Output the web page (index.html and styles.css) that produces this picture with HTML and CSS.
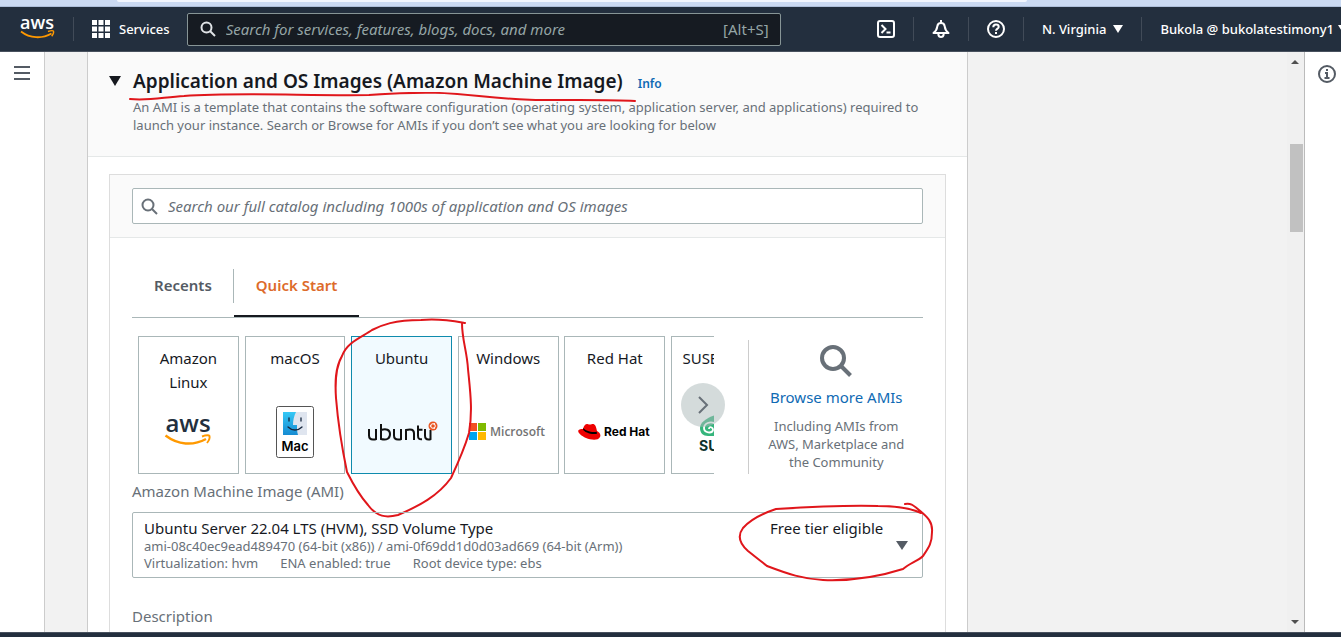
FILE: index.html
```html
<!DOCTYPE html>
<html lang="en">
<head>
<meta charset="utf-8">
<title>Launch an instance | EC2</title>
<link rel="stylesheet" href="styles.css">
</head>
<body>
<div class="browser-edge"><div class="browser-toolbar"></div></div>

<header class="topbar">
  <a class="aws-home" href="#" aria-label="AWS home">
    <svg width="36" height="42" viewBox="0 -9 36 42">
      <text x="17" y="12" text-anchor="middle" class="aws-word aws-word-light">aws</text>
      <path d="M1 14.500C10 21.500 22 22 31.500 16.500" fill="none" stroke="#f90" stroke-width="1.800"/>
      <path d="M28 14.500C31 13.500 33 13.500 33.500 14.200C34 15.500 33 17.500 31.700 19.200" fill="none" stroke="#f90" stroke-width="1.400"/>
    </svg>
  </a>
  <button class="services" type="button">
    <svg width="18" height="18" viewBox="0 0 18 18" fill="#fff"><path d="M0 0h5v5H0zM6.500 0h5v5h-5zM13 0h5v5h-5zM0 6.500h5v5H0zM6.500 6.500h5v5h-5zM13 6.500h5v5h-5zM0 13h5v5H0zM6.500 13h5v5h-5zM13 13h5v5h-5z"/></svg>
    <span>Services</span>
  </button>
  <label class="global-search">
    <svg width="16" height="16" viewBox="0 0 16 16" fill="none" stroke="#e0e3e6" stroke-width="2"><circle cx="6.500" cy="6.500" r="5"/><path d="M10 10l5 5"/></svg>
    <input type="text" aria-label="Search" placeholder="Search for services, features, blogs, docs, and more">
    <span class="shortcut">[Alt+S]</span>
  </label>
  <nav class="top-actions">
    <button type="button" aria-label="CloudShell">
      <svg width="18" height="18" viewBox="0 0 18 18" fill="none" stroke="#fff" stroke-width="2"><rect x="1" y="1" width="16" height="16" rx="2"/><path d="M4.500 5l4 4-4 4M9.500 12.500h4"/></svg>
    </button>
    <button type="button" aria-label="Notifications">
      <svg width="18" height="18" viewBox="0 0 18 18" fill="none" stroke="#fff" stroke-width="2" stroke-linejoin="round"><path d="M9 0v3M1.500 13C4.500 10.500 5 9 5.300 6.300C5.600 4.300 7 3 9 3s3.400 1.300 3.700 3.300C13 9 13.500 10.500 16.500 13zM6.200 14c.3 1.800 1.400 3 2.800 3s2.500-1.200 2.800-3"/></svg>
    </button>
    <button type="button" aria-label="Help">
      <svg width="18" height="18" viewBox="0 0 18 18" fill="none" stroke="#fff" stroke-width="2"><circle cx="9" cy="9" r="8"/><path d="M6.300 7.300C6.300 5.500 7.400 4.600 9 4.600s2.700.9 2.700 2.300C11.700 8.700 9 8.700 9 10.800M9 12v2"/></svg>
    </button>
    <button class="menu-region" type="button">N. Virginia <svg width="10" height="8" viewBox="0 0 10 8" fill="#fff"><path d="M0 0h10L5 8z"/></svg></button>
    <button class="menu-user" type="button">Bukola @ bukolatestimony1 <svg width="10" height="8" viewBox="0 0 10 8" fill="#fff"><path d="M0 0h10L5 8z"/></svg></button>
  </nav>
</header>

<div class="shell">
  <aside class="rail rail-left">
    <button type="button" aria-label="Open navigation">
      <svg width="16" height="14" viewBox="0 0 16 14" fill="#545b64"><path d="M0 0h16v2H0zM0 6h16v2H0zM0 12h16v2H0z"/></svg>
    </button>
  </aside>

  <main class="content">
    <section class="panel">
      <header class="panel-head">
        <div class="title-row">
          <svg width="12" height="10" viewBox="0 0 12 10" fill="#16191f"><path d="M0 0h12L6 10z"/></svg>
          <h2>Application and OS Images (Amazon Machine Image)</h2>
          <a href="#">Info</a>
          <svg class="mark mark-title" width="508" height="12" viewBox="0 0 508 12"><path d="M1 7C20 9 35 5 55 4C110 0 180 4 240 3C300 -1 320 1 350 4C400 9 420 8 450 8C480 8 490 8 506 9"/></svg>
        </div>
        <p>An AMI is a template that contains the software configuration (operating system, application server, and applications) required to launch your instance. Search or Browse for AMIs if you don’t see what you are looking for below</p>
      </header>

      <div class="card">
        <div class="card-search">
          <label class="catalog-search">
            <svg width="17" height="17" viewBox="0 0 17 17" fill="none" stroke="#687078" stroke-width="2"><circle cx="7" cy="7" r="5.500"/><path d="M11 11l5 5"/></svg>
            <input type="text" aria-label="Search AMIs" placeholder="Search our full catalog including 1000s of application and OS images">
          </label>
        </div>

        <div class="card-body">
          <div class="tabs" role="tablist">
            <button class="tab" role="tab" type="button" aria-selected="false">Recents</button>
            <button class="tab tab-active" role="tab" type="button" aria-selected="true">Quick Start</button>
          </div>

          <div class="picker">
            <div class="carousel">
              <div class="tiles">
                <button class="tile" type="button">
                  <span class="tile-name">Amazon Linux</span>
                  <svg width="48" height="60" viewBox="0 -14 48 60"><text x="24" y="16" text-anchor="middle" class="aws-word aws-word-dark">aws</text><path d="M1.500 19.500C14 29 29 30 42 23" fill="none" stroke="#f90" stroke-width="2.400"/><path d="M38 20.500C42 19 45 19 45.500 20C46 22 45 24.500 43 27" fill="none" stroke="#f90" stroke-width="1.900"/></svg>
                </button>
                <button class="tile" type="button">
                  <span class="tile-name">macOS</span>
                  <svg width="38" height="52" viewBox="0 0 38 52"><defs><linearGradient id="finder" x1="0" y1="0" x2="0" y2="1"><stop offset="0" stop-color="#35c8f5"/><stop offset="1" stop-color="#168bd2"/></linearGradient></defs><rect x=".5" y=".5" width="37" height="51" rx="2" fill="#fff" stroke="#555"/><path d="M7 6h24v23H7z" fill="#dfe5ef"/><path d="M7 6h13c-2 4-3 8-3 13h4c0 4 0 7 1 10H7z" fill="url(#finder)"/><path d="M13 12v3M25 12v3M12 21c4 4 10 4 14 0" fill="none" stroke="#15253c" stroke-width="1.300" stroke-linecap="round"/><text x="19" y="45" text-anchor="middle" class="mac-word">Mac</text></svg>
                </button>
                <button class="tile tile-selected" type="button" aria-pressed="true">
                  <span class="tile-name">Ubuntu</span>
                  <svg width="72" height="22" viewBox="0 0 72 22"><g fill="none" stroke="#111" stroke-width="2"><path d="M3 8v6.500C3 17.500 4.500 18.500 7 18.500c1.300 0 2.300 0 3-.4V8"/><path d="M15 3v15c6 1.500 9-.5 9-5s-4-5.500-9-4"/><path d="M28 8v6.500c0 3 1.500 4 4 4 1.300 0 2.300 0 3-.4V8"/><path d="M40 19V9c5-1.300 8-.5 8 3.500V19"/><path d="M52 4.500v10c0 3 1 4 4 3.800M52 8.800h4.500"/><path d="M59 8v6.500c0 3 1.200 4 3.500 4 .9 0 1.400 0 2-.4V9"/></g><circle cx="67" cy="5" r="4.500" fill="#e95420"/><circle cx="67" cy="5" r="2.300" fill="none" stroke="#fff"/><circle cx="64.500" cy="5" r=".8" fill="#fff"/><circle cx="68.300" cy="2.900" r=".8" fill="#fff"/><circle cx="68.300" cy="7.100" r=".8" fill="#fff"/></svg>
                </button>
                <button class="tile" type="button">
                  <span class="tile-name">Windows</span>
                  <svg width="80" height="26" viewBox="0 -4 80 26"><path d="M1 0h8v8H1z" fill="#f25022"/><path d="M10 0h8v8h-8z" fill="#7fba00"/><path d="M1 9h8v8H1z" fill="#00a4ef"/><path d="M10 9h8v8h-8z" fill="#ffb900"/><text x="22" y="13" class="ms-word">Microsoft</text></svg>
                </button>
                <button class="tile" type="button">
                  <span class="tile-name">Red Hat</span>
                  <svg width="74" height="18" viewBox="0 0 74 18"><path d="M5 6C6 2 8 .5 10 1.200c2 .8 3 .3 4-.2 3-.5 4 2 5 7 3 1.500 4 4 3 6-2 4-9 3-14 1S-.5 9.500.3 7.500C1 6 3 6 5 6z" fill="#e00"/><path d="M5 6.200c1 3 9 6 14 4.500l-.3-2C14 10 7 7.500 5.300 5z" fill="#000"/><text x="26" y="13" class="redhat-word">Red Hat</text></svg>
                </button>
                <button class="tile" type="button">
                  <span class="tile-name tile-name-line">SUSE Linux</span>
                  <svg width="44" height="50" viewBox="0 0 44 50"><path d="M19 7C10 10 1 14 1 21c0 5 3 8 8 8h10z" fill="#35b57c"/><path d="M17 17c-6-4-12 0-12 4 0 5 8 6 9 2 0-3-4-4-4-1" fill="none" stroke="#fff" stroke-width="1.800"/><text x="0" y="44" class="suse-word">SUSE</text></svg>
                </button>
              </div>
              <button class="next" type="button" aria-label="Next"><svg width="12" height="18" viewBox="0 0 12 18" fill="none" stroke="#687078" stroke-width="2"><path d="M2 1l8 8-8 8"/></svg></button>
              <svg class="mark mark-ubuntu" width="138" height="202" viewBox="0 0 138 202"><path d="M131 5C120 3 105 0 87 2C60 2 48 7 38 12C28 19 13 24 8 38C1 50 1 65 2 80C4 105 8 130 13 154C19 166 26 178 34 187C43 199 52 200 64 197C85 188 104 178 117 160C124 145 130 132 135 115C139 92 136 72 134 51C133 33 128 22 128 5"/></svg>
            </div>
            <div class="browse">
              <svg width="34" height="34" viewBox="0 0 34 34" fill="none" stroke="#687078"><circle cx="14" cy="14" r="11" stroke-width="4"/><path d="M21 21l10.500 10.500" stroke-width="4"/></svg>
              <a href="#">Browse more AMIs</a>
              <p>Including AMIs from AWS, Marketplace and the Community</p>
            </div>
          </div>

          <div class="field">
            <label id="ami-label" for="ami">Amazon Machine Image (AMI)</label>
            <button id="ami" class="ami-select" type="button" aria-haspopup="listbox">
              <span class="ami-main">
                <span class="ami-name">Ubuntu Server 22.04 LTS (HVM), SSD Volume Type</span>
                <span class="ami-meta">ami-08c40ec9ead489470 (64-bit (x86)) / ami-0f69dd1d0d03ad669 (64-bit (Arm))</span>
                <span class="ami-meta ami-tags"><span>Virtualization: hvm</span><span>ENA enabled: true</span><span>Root device type: ebs</span></span>
              </span>
              <span class="ami-name">Free tier eligible</span>
              <svg class="ami-caret" width="12" height="9" viewBox="0 0 12 9" fill="#545b64"><path d="M0 0h12L6 9z"/></svg>
              <svg class="mark mark-tier" width="196" height="82" viewBox="0 0 196 82"><path d="M183 12C170 6 155 5 140 5C110 4 70 6 38 8C23 13 12 19 5 27C-1 35 2 43 10 50C20 58 23 60 29 65C50 73 65 78 85 79C110 80 140 76 165 68C172 62 180 60 185 55C191 46 194 42 194 31C195 20 188 15 181 9C175 4 173 2 167 3"/></svg>
            </button>
          </div>
          <h3 class="description">Description</h3>
        </div>
      </div>
    </section>
  </main>

  <div class="scrollbar">
    <svg width="8" height="4" viewBox="0 0 8 4" fill="#505050"><path d="M0 4h8L4 0z"/></svg>
    <div class="thumb"></div>
    <svg class="scroll-down" width="8" height="4" viewBox="0 0 8 4" fill="#505050"><path d="M0 0h8L4 4z"/></svg>
  </div>

  <aside class="rail rail-right">
    <button type="button" aria-label="Info">
      <svg width="18" height="18" viewBox="0 0 18 18" fill="none" stroke="#545b64" stroke-width="2"><circle cx="9" cy="9" r="8"/><path d="M9 4v2M7 8h2v5M6.500 13h5"/></svg>
    </button>
  </aside>
</div>

<footer class="bottom-bar"></footer>
</body>
</html>
```

FILE: styles.css
```css
* { box-sizing: border-box; }

body {
  margin: 0;
  height: 100vh;
  display: flex;
  flex-direction: column;
  overflow: hidden;
  font-family: "Noto Sans", "Open Sans", sans-serif;
  font-size: 15px;
  color: #16191f;
  background: #f2f2f2;
}

button {
  border: 0;
  padding: 0;
  background: none;
  font: inherit;
  color: inherit;
  cursor: pointer;
}

input {
  flex: 1;
  min-width: 0;
  border: 0;
  outline: 0;
  padding: 0;
  background: none;
  font: inherit;
  color: inherit;
}

input::placeholder { font-style: italic; opacity: 1; }
a { color: #0f6ab4; text-decoration: none; }
h2, h3, p { margin: 0; }
svg { flex: none; display: block; }

/* Browser strip */
.browser-edge {
  flex: none;
  height: 7px;
  padding: 0 314px 0 117px;
  background: #cbdaf2;
  border-bottom: 1px solid #aebfda;
}
.browser-toolbar { height: 2px; background: #f2f6fd; border-radius: 0 0 4px 4px; }

/* Top bar */
.topbar {
  flex: none;
  height: 45px;
  display: flex;
  align-items: center;
  overflow: hidden;
  background: #232f3e;
  border-bottom: 1px solid #48515e;
  color: #fff;
  font-size: 13px;
  font-weight: 500;
}
.aws-home { display: flex; align-items: center; height: 24px; padding: 0 17px 0 20px; border-right: 1px solid #414b58; }
.aws-word { font-family: "Open Sans", sans-serif; font-weight: 600; }
.aws-word-light { font-size: 18px; fill: #fff; }
.aws-word-dark { font-size: 24px; fill: #232f3e; }
.services { display: flex; align-items: center; gap: 9px; margin: 0 17px 0 18px; }

.global-search {
  flex: 0 1 594px;
  height: 33px;
  display: flex;
  align-items: center;
  gap: 10px;
  padding: 0 11px 0 12px;
  border: 1px solid #879596;
  border-radius: 2px;
  background: #161b22;
  color: #95a5a6;
  font-size: 15px;
  font-weight: 400;
}
.global-search input::placeholder { color: #95a5a6; }

.top-actions { display: flex; align-items: center; margin-left: auto; margin-right: -7px; }
.top-actions button {
  height: 24px;
  padding: 0 18px;
  display: flex;
  align-items: center;
  gap: 7px;
  white-space: nowrap;
  border-right: 1px solid #414b58;
}
.top-actions .menu-user { gap: 4px; padding-right: 0; border: 0; }

/* Page shell */
.shell { flex: 1; min-height: 0; display: flex; }
.rail { flex: none; background: #fff; }
.rail-left { width: 45px; padding: 14px; border-right: 1px solid #ccc; }
.rail-right { width: 37px; padding: 13px; border-left: 1px solid #bbb; }
.rail button { display: block; }
.content {
  flex: 1;
  min-width: 0;
  overflow: hidden;
  display: grid;
  grid-template-columns: 47fr 17fr;
  padding-left: 42px;
}
.scrollbar {
  flex: none;
  width: 17px;
  display: flex;
  flex-direction: column;
  align-items: center;
  padding: 8px 1px 8px 0;
  background: #f0f0f0;
}
.thumb { width: 13px; height: 88px; margin-top: 80px; background: #c1c1c1; align-self: flex-end; }
.scroll-down { margin-top: auto; }

.panel { background: #fff; border: solid #ccc; border-width: 0 1px; }
.panel-head {
  padding: 14px 30px 22px 45px;
  background: #fafafa;
  border-bottom: 1px solid #e5e8e8;
}
.title-row {
  position: relative;
  display: flex;
  align-items: center;
  gap: 12px;
  margin-left: -24px;
}
.title-row h2 { font-size: 19px; line-height: 30px; font-weight: 600; white-space: nowrap; }
.title-row a { font-size: 12px; font-weight: 600; padding: 4px 0 0 3px; }
.panel-head p { padding-top: 2px; font-size: 13px; line-height: 18px; color: #687078; }

.mark {
  position: absolute;
  fill: none;
  stroke: #e0161b;
  stroke-width: 2;
  stroke-linecap: round;
  pointer-events: none;
}
.mark-title { left: 20px; top: 26px; }

.card { margin: 17px 21px 0; border: 1px solid #ddd; }
.card-search { padding: 13px 22px; background: #fafafa; border-bottom: 1px solid #e5e8e8; }
.catalog-search {
  height: 36px;
  display: flex;
  align-items: center;
  gap: 10px;
  padding: 0 8px;
  border: 1px solid #aab7b8;
  border-radius: 2px;
  background: #fff;
}
.catalog-search input::placeholder { color: #687078; }

.card-body { padding: 19px 22px 24px; color: #687078; }
.tabs { display: flex; border-bottom: 1px solid #aab7b8; }
.tab {
  height: 60px;
  display: flex;
  align-items: center;
  padding: 0 22px 2px;
  font-weight: 600;
  color: #545b64;
  border-bottom: 2px solid transparent;
}
.tab:first-child { position: relative; }
.tab:first-child::after {
  content: "";
  position: absolute;
  right: 0;
  top: 12px;
  height: 34px;
  border-right: 1px solid #aab7b8;
}
.tab-active { color: #dd6b2b; border-bottom-color: #16191f; }

.picker { display: flex; padding-top: 18px; }
.carousel { flex: 1; min-width: 0; position: relative; padding: 0 34px 0 6px; }
.tiles {
  display: grid;
  grid-auto-flow: column;
  grid-auto-columns: 17.5%;
  column-gap: 1%;
  overflow: hidden;
}
.tile {
  height: 138px;
  display: flex;
  flex-direction: column;
  align-items: center;
  padding-bottom: 4px;
  border: 1px solid #aab7b8;
  background: #fff;
  color: #16191f;
}
.tile-name { height: 48px; margin-top: 9px; padding: 0 8px; line-height: 24px; }
.tile-name-line { white-space: nowrap; }
.tile svg { margin: auto; }
.tile-selected { background: #f1faff; border-color: #0f8bad; }
.mac-word { font: 600 13px Inter, sans-serif; }
.ms-word { font: 600 12px "Open Sans", sans-serif; fill: #737373; }
.redhat-word { font: 700 12px Inter, sans-serif; }
.suse-word { font: 700 14px Inter, sans-serif; fill: #0c322c; }

.next {
  position: absolute;
  right: 23px;
  top: 47px;
  width: 44px;
  height: 44px;
  display: grid;
  place-items: center;
  border-radius: 50%;
  background: rgba(170, 183, 184, 0.5);
}
.mark-ubuntu { left: 202px; top: -18px; }

.browse {
  flex: 0 0 175px;
  display: flex;
  flex-direction: column;
  align-items: center;
  margin-top: 4px;
  padding: 4px 18px 0;
  border-left: 1px solid #ccc;
  text-align: center;
}
.browse a { line-height: 20px; margin-top: 9px; white-space: nowrap; }
.browse p { font-size: 13px; line-height: 18px; margin-top: 10px; }

.field label { display: block; line-height: 20px; padding: 7px 0 11px; }
.ami-select {
  position: relative;
  width: 100%;
  height: 66px;
  display: flex;
  align-items: flex-start;
  gap: 13px;
  padding: 5px 14px 5px 11px;
  border: 1px solid #aab7b8;
  border-radius: 2px;
  text-align: left;
}
.ami-main { flex: 1; min-width: 0; display: flex; flex-direction: column; }
.ami-name { line-height: 20px; color: #16191f; }
.ami-meta { font-size: 13px; line-height: 17px; }
.ami-tags { display: flex; gap: 22px; }
.ami-caret { align-self: center; }
.mark-tier { right: -12px; top: -12px; }
.description { font-size: 15px; font-weight: 400; line-height: 20px; padding-top: 28px; }

.bottom-bar { flex: none; height: 5px; background: #232f3e; border-top: 1px solid #48515e; }
```
